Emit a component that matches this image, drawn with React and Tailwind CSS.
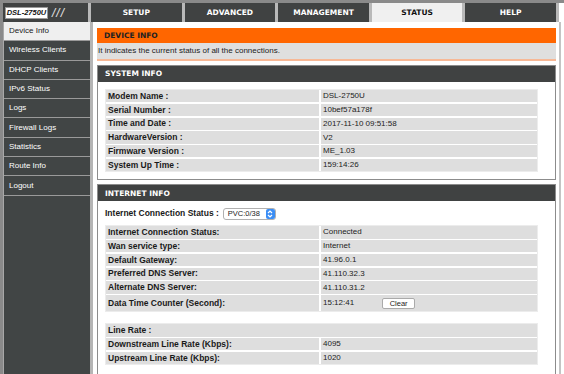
import React from "react";

const TABS = ["SETUP", "ADVANCED", "MANAGEMENT", "STATUS", "HELP"];
const MENU = [
  "Device Info",
  "Wireless Clients",
  "DHCP Clients",
  "IPv6 Status",
  "Logs",
  "Firewall Logs",
  "Statistics",
  "Route Info",
  "Logout",
];

const SYSTEM = [
  ["Modem Name :", "DSL-2750U"],
  ["Serial Number :", "10bef57a178f"],
  ["Time and Date :", "2017-11-10 09:51:58"],
  ["HardwareVersion :", "V2"],
  ["Firmware Version :", "ME_1.03"],
  ["System Up Time :", "159:14:26"],
];

const INTERNET = [
  ["Internet Connection Status:", "Connected"],
  ["Wan service type:", "Internet"],
  ["Default Gateway:", "41.96.0.1"],
  ["Preferred DNS Server:", "41.110.32.3"],
  ["Alternate DNS Server:", "41.110.31.2"],
];

const LINE_RATE = [
  ["Downstream Line Rate (Kbps):", "4095"],
  ["Upstream Line Rate (Kbps):", "1020"],
];

const Row = ({ label, value, tall, children }) => (
  <div className={`flex gap-[2px] ${tall ? "h-[16px]" : "h-[12.3px]"}`}>
    <div className="w-[213px] bg-[#dedede] pl-[2px] flex items-center text-[8.5px] font-bold text-[#1a1a1a]">
      {label}
    </div>
    <div className="flex-1 bg-[#dedede] pl-[2px] flex items-center text-[8px] text-[#222]">
      {value}
      {children}
    </div>
  </div>
);

const PanelHeader = ({ title }) => (
  <div
    className="h-[16px] bg-[#404242] pl-[7px] flex items-center text-white text-[7.5px] font-bold"
    style={{ fontFamily: '"DejaVu Sans", sans-serif' }}
  >
    {title}
  </div>
);

export default function App() {
  return (
    <div
      className="w-[564px] h-[374px] overflow-hidden bg-[#8a8a8a] pt-[3px] pl-[3px] flex flex-col"
      style={{ fontFamily: '"Liberation Sans", Arial, sans-serif' }}
    >
      {/* top navigation */}
      <div className="flex h-[19px] bg-[#b9b9b9] gap-[3px]">
        <div className="w-[85px] bg-[#404242] flex items-center pl-[2px] gap-[4px]">
          <div className="h-[12px] w-[43px] bg-white border border-[#999] flex items-center justify-center text-[7.5px] font-bold italic text-[#111]">
            DSL-2750U
          </div>
          <span className="text-[#e8e8e8] text-[12px] italic font-light tracking-[1px]">///</span>
        </div>
        <div className="w-[465px] grid grid-cols-5 gap-[3px]">
          {TABS.map((t) => (
            <div
              key={t}
              className={`flex items-center justify-center text-[7.5px] font-bold ${
                t === "STATUS" ? "bg-[#f0f0f0] text-[#111]" : "bg-[#404242] text-white"
              }`}
              style={{ fontFamily: '"DejaVu Sans", sans-serif' }}
            >
              {t}
            </div>
          ))}
        </div>
        <div className="flex-1 bg-white" />
      </div>

      <div className="flex flex-1 min-h-0">
        {/* sidebar */}
        <div className="w-[87px] bg-[#414545] border-l border-[#a8a8a8] flex flex-col">
          {MENU.map((m) => (
            <div
              key={m}
              className={`h-[19.3px] shrink-0 border-b border-[#9a9a9a] pl-[5px] flex items-center text-[8px] ${
                m === "Device Info" ? "bg-[#efefef] text-[#222]" : "text-white"
              }`}
            >
              {m}
            </div>
          ))}
        </div>
        <div className="w-[3px] bg-[#b5b5b5]" />

        {/* content */}
        <div className="flex-1 bg-white pl-[4px] pt-[6px] flex">
          <div className="w-[459px] flex flex-col">
            <div
              className="h-[15px] bg-[#ff6600] pl-[7px] flex items-center text-[7.5px] font-bold text-[#222]"
              style={{ fontFamily: '"DejaVu Sans", sans-serif' }}
            >
              DEVICE INFO
            </div>
            <div className="h-[18px] bg-[#dfdfdf] pl-[1px] flex items-center text-[8px] text-[#222] border-b-2 border-[#f7b896]">
              It indicates the current status of all the connections.
            </div>

            <div className="mt-[4px] border border-[#8c8c8c] pb-[7px]">
              <PanelHeader title="SYSTEM INFO" />
              <div className="mt-[7px] ml-[7px] w-[433px] flex flex-col gap-[1.5px] border border-[#ececec]">
                {SYSTEM.map(([l, v]) => (
                  <Row key={l} label={l} value={v} />
                ))}
              </div>
            </div>

            <div className="mt-[4px] border border-[#8c8c8c] border-b-0 flex-1">
              <PanelHeader title="INTERNET INFO" />
              <div className="mt-[6px] ml-[7px] flex items-center gap-[4px] h-[13px]">
                <span className="text-[8.5px] font-bold text-[#1a1a1a]">
                  Internet Connection Status :
                </span>
                <div className="h-[12px] w-[53px] rounded-[3px] border border-[#b0b0b0] bg-white flex items-center justify-between pl-[4px] text-[7.5px] text-[#222]">
                  PVC:0/38
                  <div className="h-[10px] w-[9px] rounded-[2px] bg-[#3b8ef5] flex items-center justify-center">
                    <svg width="6" height="8" viewBox="0 0 6 8" fill="none" stroke="white" strokeWidth="1.2">
                      <path d="M1 3 L3 1 L5 3" />
                      <path d="M1 5 L3 7 L5 5" />
                    </svg>
                  </div>
                </div>
              </div>
              <div className="mt-[5px] ml-[7px] w-[433px] flex flex-col gap-[1.5px] border border-[#ececec]">
                {INTERNET.map(([l, v]) => (
                  <Row key={l} label={l} value={v} />
                ))}
                <Row label="Data Time Counter (Second):" value="15:12:41" tall>
                  <div className="ml-[28px] h-[11px] w-[33px] rounded-[2px] border border-[#aaa] bg-white flex items-center justify-center text-[7.5px] text-[#222]">
                    Clear
                  </div>
                </Row>
              </div>
              <div className="mt-[11px] ml-[7px] w-[433px] flex flex-col gap-[1.5px] border border-[#ececec]">
                <div className="h-[12.3px] bg-[#dedede] pl-[2px] flex items-center text-[8.5px] font-bold text-[#1a1a1a]">
                  Line Rate :
                </div>
                {LINE_RATE.map(([l, v]) => (
                  <Row key={l} label={l} value={v} />
                ))}
              </div>
            </div>
          </div>
          <div className="ml-[3px] mt-[-6px] w-[2px] bg-[#c4c4c4]" />
        </div>
      </div>
    </div>
  );
}
